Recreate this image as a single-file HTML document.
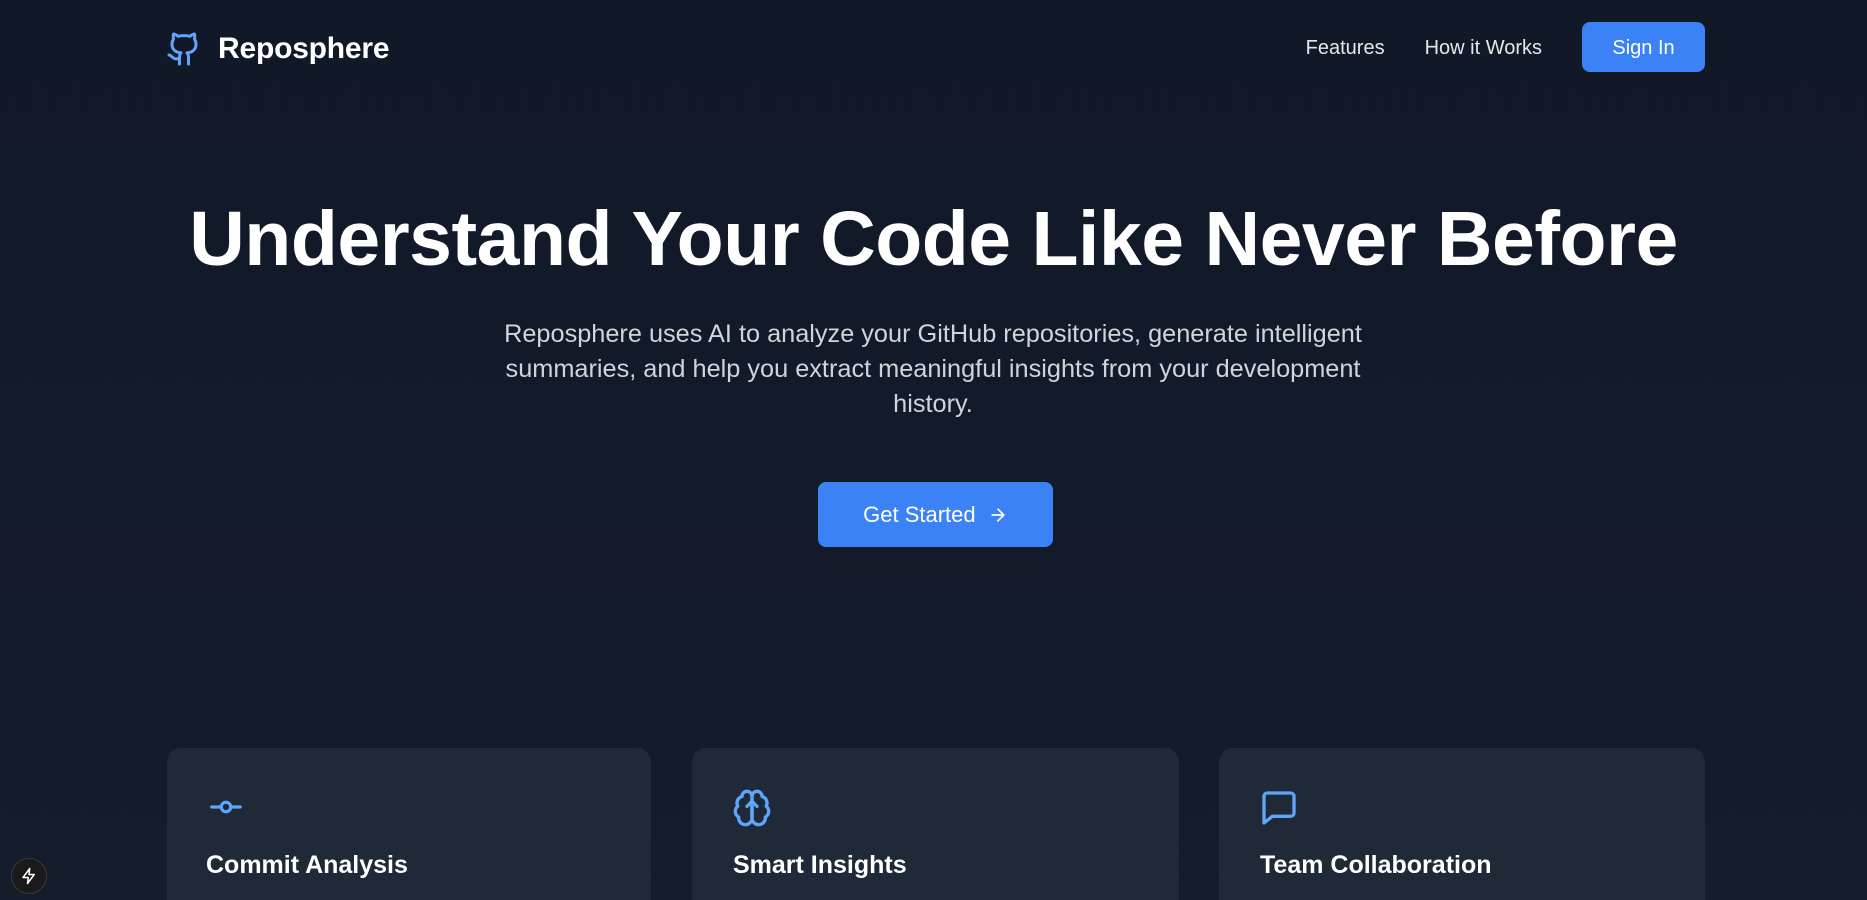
<!DOCTYPE html>
<html><head><meta charset="utf-8"><style>
*{margin:0;padding:0;box-sizing:border-box}
html,body{width:1867px;height:900px;overflow:hidden}
body{background:linear-gradient(180deg,#111827 0%,#151c2c 100%);font-family:"Liberation Sans",sans-serif;color:#fff;position:relative}
.logo{position:absolute;left:166px;top:31px;display:flex;align-items:center}
.logo span{font-size:30px;font-weight:bold;margin-left:16px;letter-spacing:-0.2px}
.nav{position:absolute;top:22px;right:162px;display:flex;align-items:center}
.nav a{color:#e5e7eb;font-size:20px;margin-right:40px;text-decoration:none;position:relative;top:1px}
.btn{background:#3b82f6;color:#fff;border-radius:8px;display:flex;align-items:center;justify-content:center}
.signin{width:123px;height:50px;font-size:20px;padding-top:2px}
h1{position:absolute;top:195px;left:0;width:100%;text-align:center;font-size:77px;font-weight:bold;letter-spacing:-0.5px}
p.sub{position:absolute;top:317px;left:473px;width:920px;text-align:center;font-size:25.3px;line-height:35px;color:#d1d5db}
.gs{position:absolute;left:818px;top:482px;width:235px;height:65px;font-size:22px}
.card{position:absolute;top:748px;height:200px;background:#1f2937;border-radius:14px}
.card svg{position:absolute;left:40px;top:40px}
h3{position:absolute;top:851px;font-size:25px;font-weight:bold}
.badge{position:absolute;left:11px;top:858px;width:36px;height:36px;border-radius:50%;background:#1a1a1a;border:1px solid #3a3a3a;display:flex;align-items:center;justify-content:center}
</style></head><body>
<div class="logo"><svg width="36" height="36" viewBox="0 0 24 24" fill="none" stroke="#60a5fa" stroke-width="2" stroke-linecap="round" stroke-linejoin="round"><path d="M15 22v-4a4.8 4.8 0 0 0-1-3.5c3 0 6-2 6-5.5.08-1.25-.27-2.48-1-3.5.28-1.150.28-2.35 0-3.5 0 0-1 0-3 1.5-2.64-.5-5.36-.5-8 0C6 2 5 2 5 2c-.3 1.15-.3 2.35 0 3.5A5.403 5.403 0 0 0 4 9c0 3.5 3 5.5 6 5.5-.39.49-.68 1.05-.85 1.650-.17.6-.22 1.23-.15 1.85v4"/><path d="M9 18c-4.51 2-5-2-7-2"/></svg><span>Reposphere</span></div>
<div class="nav"><a>Features</a><a>How it Works</a><div class="btn signin">Sign In</div></div>
<h1>Understand Your Code Like Never Before</h1>
<p class="sub">Reposphere uses AI to analyze your GitHub repositories, generate intelligent summaries, and help you extract meaningful insights from your development history.</p>
<div class="btn gs">Get Started&nbsp;&nbsp;<svg width="20" height="20" viewBox="0 0 24 24" fill="none" stroke="#fff" stroke-width="2" stroke-linecap="round" stroke-linejoin="round"><path d="M5 12h14M12 5l7 7-7 7"/></svg></div>
<div class="card" style="left:167px;width:484px"><svg width="38" height="38" viewBox="0 0 24 24" fill="none" stroke="#60a5fa" stroke-width="2" stroke-linecap="round"><circle cx="12" cy="12" r="3"/><path d="M3 12h6M15 12h6"/></svg></div>
<div class="card" style="left:692px;width:487px"><svg width="40" height="40" viewBox="0 0 24 24" fill="none" stroke="#60a5fa" stroke-width="2" stroke-linecap="round" stroke-linejoin="round"><path d="M12 5a3 3 0 1 0-5.997.125 4 4 0 0 0-2.526 5.77 4 4 0 0 0 .556 6.588A4 4 0 1 0 12 18Z"/><path d="M12 5a3 3 0 1 1 5.997.125 4 4 0 0 1 2.526 5.770 4 4 0 0 1-.556 6.588A4 4 0 1 1 12 18Z"/><path d="M12 18V8M9 11l3-3 3 3"/></svg></div>
<div class="card" style="left:1219px;width:486px"><svg width="40" height="40" viewBox="0 0 24 24" fill="none" stroke="#60a5fa" stroke-width="2" stroke-linecap="round" stroke-linejoin="round"><path d="M5 3h14a2 2 0 0 1 2 2v10a2 2 0 0 1-2 2H8l-5 4V5a2 2 0 0 1 2-2z"/></svg></div>
<h3 style="left:206px">Commit Analysis</h3>
<h3 style="left:733px">Smart Insights</h3>
<h3 style="left:1260px">Team Collaboration</h3>
<div class="badge"><svg width="18" height="18" viewBox="0 0 24 24" fill="none" stroke="#fff" stroke-width="2" stroke-linejoin="round"><path d="M13 2 4 14h7l-1 8 9-12h-7z"/></svg></div>
</body></html>
